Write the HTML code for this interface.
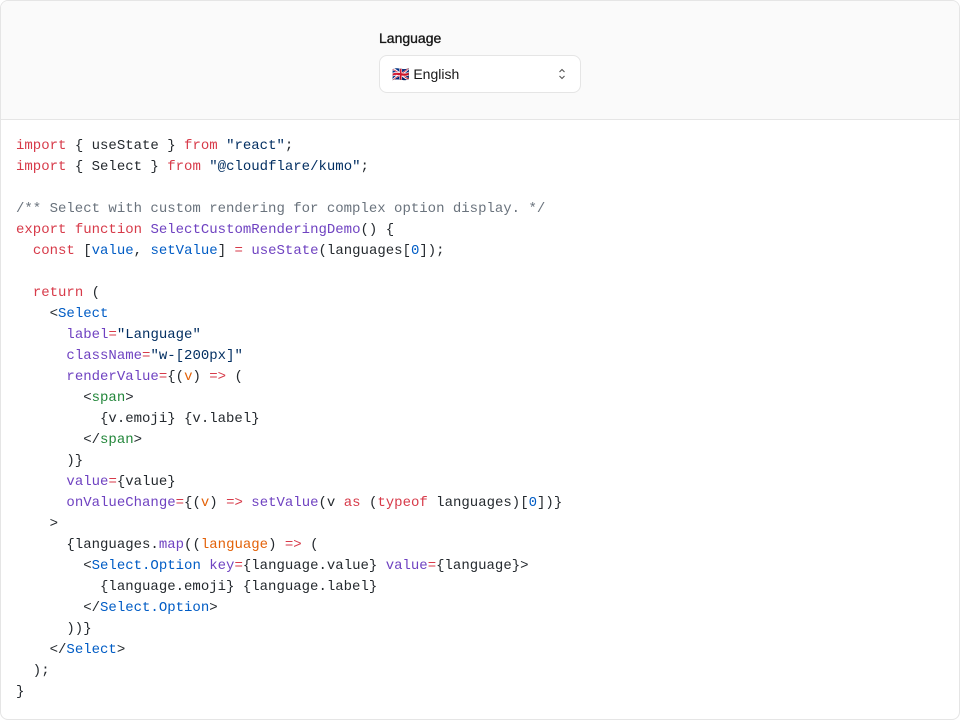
<!DOCTYPE html>
<html><head><meta charset="utf-8"><style>
html,body{margin:0;padding:0;background:#fff;}
.wrap{position:absolute;left:0;top:0;width:958px;height:718px;border:1px solid #e5e5e5;border-radius:8px;overflow:hidden;background:#fff;}
.top{height:118px;background:#fafafa;border-bottom:1px solid #e5e5e5;position:relative;}
.lbl{position:absolute;left:378px;top:29px;font:400 14px "Liberation Sans",sans-serif;color:#171717;-webkit-text-stroke:0.35px #171717;}
.sel{position:absolute;left:378px;top:54px;width:200px;height:36px;border:1px solid #e5e5e5;border-radius:8px;background:#fff;font:14px "Liberation Sans",sans-serif;color:#171717;}
.sel .t{position:absolute;left:12px;top:10px;}
.sel svg{position:absolute;right:14px;top:12px;}
pre{position:absolute;left:15px;top:135px;margin:0;font:14px/21px "Liberation Mono",monospace;color:#24292e;}
.k{color:#d73a49}.s{color:#032f62}.f{color:#6f42c1}.v{color:#005cc5}.c{color:#6a737d}.g{color:#22863a}.o{color:#e36209}
</style></head><body><div class="wrap">
<div class="top"><div class="lbl">Language</div>
<div class="sel"><span class="t">🇬🇧 English</span><svg width="8" height="12" viewBox="0 0 8 12"><path d="M1.5 4 L4 1.5 L6.5 4 M1.5 8 L4 10.5 L6.5 8" fill="none" stroke="#555" stroke-width="1.1"/></svg></div></div>
<pre><span class="k">import</span> { useState } <span class="k">from</span> <span class="s">"react"</span>;
<span class="k">import</span> { Select } <span class="k">from</span> <span class="s">"@cloudflare/kumo"</span>;

<span class="c">/** Select with custom rendering for complex option display. */</span>
<span class="k">export</span> <span class="k">function</span> <span class="f">SelectCustomRenderingDemo</span>() {
  <span class="k">const</span> [<span class="v">value</span>, <span class="v">setValue</span>] <span class="k">=</span> <span class="f">useState</span>(languages[<span class="v">0</span>]);

  <span class="k">return</span> (
    &lt;<span class="v">Select</span>
      <span class="f">label</span><span class="k">=</span><span class="s">"Language"</span>
      <span class="f">className</span><span class="k">=</span><span class="s">"w-[200px]"</span>
      <span class="f">renderValue</span><span class="k">=</span>{(<span class="o">v</span>) <span class="k">=&gt;</span> (
        &lt;<span class="g">span</span>&gt;
          {v.emoji} {v.label}
        &lt;/<span class="g">span</span>&gt;
      )}
      <span class="f">value</span><span class="k">=</span>{value}
      <span class="f">onValueChange</span><span class="k">=</span>{(<span class="o">v</span>) <span class="k">=&gt;</span> <span class="f">setValue</span>(v <span class="k">as</span> (<span class="k">typeof</span> languages)[<span class="v">0</span>])}
    &gt;
      {languages.<span class="f">map</span>((<span class="o">language</span>) <span class="k">=&gt;</span> (
        &lt;<span class="v">Select.Option</span> <span class="f">key</span><span class="k">=</span>{language.value} <span class="f">value</span><span class="k">=</span>{language}&gt;
          {language.emoji} {language.label}
        &lt;/<span class="v">Select.Option</span>&gt;
      ))}
    &lt;/<span class="v">Select</span>&gt;
  );
}</pre>
</div></body></html>
